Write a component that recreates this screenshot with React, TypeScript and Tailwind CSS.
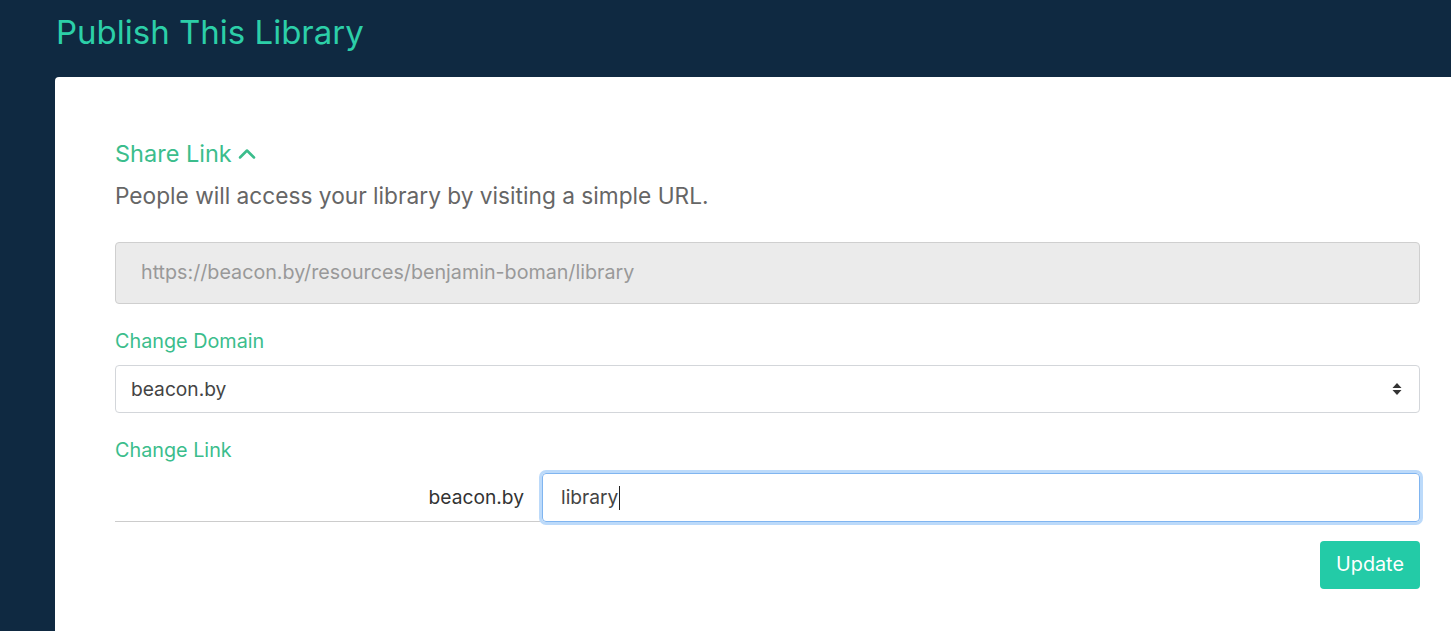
import { ChevronUp } from 'lucide-react';

export default function App() {
  return (
    <div className="min-h-screen bg-[#0f2941] pl-[55px] font-['Inter',sans-serif]">
      <h1 className="h-[77px] pl-px pt-[10px] text-[33px] leading-[44px] text-[#2ccfa8]">Publish This Library</h1>

      <div className="min-h-[554px] rounded-tl-[4px] bg-white pl-[60px] pr-[31px] pt-[62px]">
        {/* Share link header */}
        <button className="flex items-center text-[23.5px] leading-[30px] text-[#3bbd8c]">
          Share Link
          <ChevronUp className="ml-px h-7 w-7" strokeWidth={2.2} />
        </button>
        <p className="mt-[12px] text-[22.7px] leading-[30px] text-[#666]">
          People will access your library by visiting a simple URL.
        </p>

        <div className="mt-[31px] flex h-[62px] items-center rounded-[4px] border border-[#cfcfcf] bg-[#ebebeb] px-[25px] text-[19.7px] text-[#999]">
          https://beacon.by/resources/benjamin-boman/library
        </div>

        <label className="mt-[24px] block text-[19.8px] leading-[26px] text-[#3bbd8c]">Change Domain</label>
        <div className="mt-[11px] flex h-[48px] items-center justify-between rounded-[4px] border border-[#d3d6da] pl-[15px] pr-[17px] text-[19.2px] text-[#444]">
          <span>beacon.by</span>
          <svg width="10" height="14" viewBox="0 0 10 14" className="text-[#333]">
            <path d="M5 1 L9.5 6 H0.5 Z" fill="currentColor" />
            <path d="M5 13 L9.5 8 H0.5 Z" fill="currentColor" />
          </svg>
        </div>

        <label className="mt-[24px] block text-[19.8px] leading-[26px] text-[#3bbd8c]">Change Link</label>
        <div className="mt-[10px] flex items-end">
          <div className="flex h-[48px] w-[427px] items-center justify-end border-b border-[#cccccc] pr-[18px] text-[19.2px] text-[#333]">
            beacon.by
          </div>
          <div className="flex h-[49px] flex-1 items-center rounded-[4px] border border-[#80b5f0] pl-[18px] text-[19.2px] text-[#444] shadow-[0_0_0_3px_#bcdafa]">
            library<span className="ml-px h-[24px] w-px bg-[#222]" />
          </div>
        </div>

        <div className="mt-[19px] flex justify-end">
          <button className="h-[48px] w-[100px] rounded-[4px] bg-[#23cba7] text-[19.8px] text-white">Update</button>
        </div>
      </div>
    </div>
  );
}
